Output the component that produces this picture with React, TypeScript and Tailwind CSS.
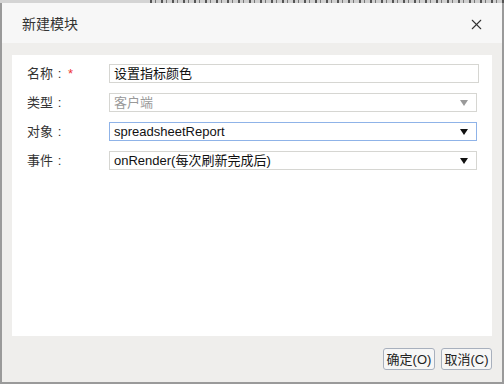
import { X } from 'lucide-react';

const FONT = "font-['Liberation_Sans','Noto_Sans_CJK_SC',sans-serif]";

const Caret = ({ muted }: { muted?: boolean }) => (
  <svg width="8" height="6" viewBox="0 0 8 6" className="shrink-0">
    <path d="M0 0 H8 L4 6 Z" fill={muted ? '#9a9a9a' : '#111'} />
  </svg>
);

const Row = ({ label, required, children }: { label: string; required?: boolean; children: React.ReactNode }) => (
  <div className="flex items-center h-[19px]">
    <div className="w-[82px] shrink-0 flex items-center text-[13px] text-[#333] leading-none">
      <span>{label}</span>
      <span className="w-[13px] text-center">:</span>
      {required && <span className="text-[#e33] ml-[2px]">*</span>}
    </div>
    {children}
  </div>
);

const Select = ({ value, muted, focused }: { value: string; muted?: boolean; focused?: boolean }) => (
  <div
    className={`w-[368px] h-[19px] flex items-center justify-between pl-[4px] pr-[8px] bg-white border ${
      focused ? 'border-[#8fb3e8]' : 'border-[#d6d6d2]'
    }`}
  >
    <span className={`text-[13px] leading-none ${muted ? 'text-[#999]' : 'text-[#111]'}`}>{value}</span>
    <Caret muted={muted} />
  </div>
);

export default function App() {
  return (
    <div className={`w-[504px] h-[384px] bg-[#8c8c8c] ${FONT}`}>
      {/* sliver of the page behind the dialog */}
      <div className="h-[3px] flex">
        <div className="w-[150px] bg-[#d4d4d4]" />
        <div className="flex-1 bg-[repeating-linear-gradient(90deg,#555_0px,#555_2px,#d0d0d0_2px,#d0d0d0_5px,#777_5px,#777_6px,#d0d0d0_6px,#d0d0d0_11px)]" />
      </div>
      <div className="h-[381px] flex flex-col border-x-2 border-b-2 border-[#9a9a9a]">
        <div className="h-[40px] bg-[#f7f7f7] flex items-center justify-between pl-[20px] pr-[17px] pt-[2px]">
          <span className="text-[14px] text-[#333]">新建模块</span>
          <X className="w-[17px] h-[17px] text-[#333]" strokeWidth={1.5} />
        </div>
        <div className="flex-1 bg-[#efeeec] flex flex-col px-[10px] pt-[12px]">
          <div className="h-[281px] bg-white pl-[15px] pt-[9px] flex flex-col gap-[10px]">
            <Row label="名称" required>
              <div className="w-[370px] h-[19px] flex items-center pl-[4px] border border-[#d6d6d2] text-[13px] text-[#111] leading-none">
                设置指标颜色
              </div>
            </Row>
            <Row label="类型">
              <Select value="客户端" muted />
            </Row>
            <Row label="对象">
              <Select value="spreadsheetReport" focused />
            </Row>
            <Row label="事件">
              <Select value="onRender(每次刷新完成后)" />
            </Row>
          </div>
          <div className="flex justify-end gap-[6px] mt-[12px]">
            <button className="w-[52px] h-[22px] rounded-[3px] border border-[#a8b0bd] bg-[#f6f6f6] text-[13px] text-[#222] leading-none">
              确定(O)
            </button>
            <button className="w-[51px] h-[22px] rounded-[3px] border border-[#a8b0bd] bg-[#f6f6f6] text-[13px] text-[#222] leading-none">
              取消(C)
            </button>
          </div>
        </div>
      </div>
    </div>
  );
}
